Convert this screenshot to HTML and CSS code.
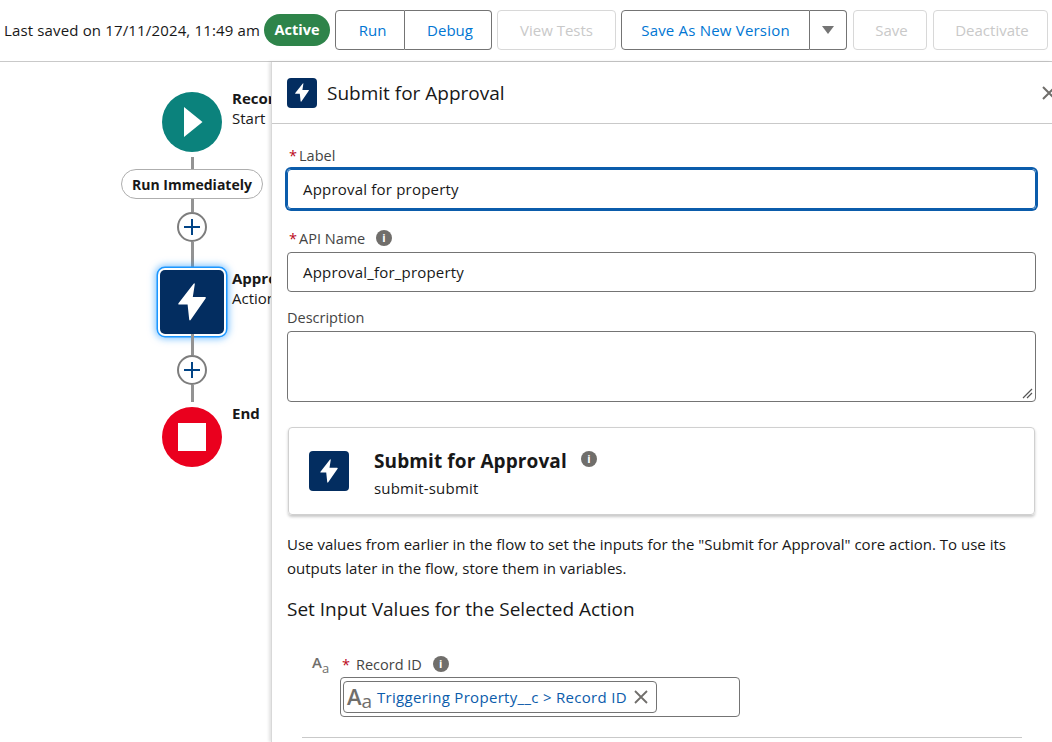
FILE: index.html
```html
<!DOCTYPE html>
<html lang="en">
<head>
  <meta charset="UTF-8">
  <title>Submit for Approval</title>
  <link rel="stylesheet" href="styles.css">
</head>
<body>
  <svg class="defs" width="0" height="0">
    <symbol id="bolt" viewBox="0 0 28 38">
      <path d="M15.6 0.8 L0.5 20.2 Q-0.2 21.5 1.2 21.5 L9.6 21.5 L11.2 36.6 Q11.8 38.4 12.8 36.8 L27.6 15.4 Q28.4 14 27 14 L14.8 14 L16.8 1.2 Q16.8 -0.4 15.6 0.8 Z"/>
    </symbol>
  </svg>

  <header class="toolbar">
    <span class="saved">Last saved on 17/11/2024, 11:49 am</span>
    <span class="status">Active</span>
    <div class="btn-group run-group">
      <button class="btn run-btn">Run</button>
      <button class="btn debug-btn">Debug</button>
    </div>
    <button class="btn single tests-btn" disabled>View Tests</button>
    <div class="btn-group save-group">
      <button class="btn save-new-btn">Save As New Version</button>
      <button class="btn caret-btn"><span class="caret"></span></button>
    </div>
    <button class="btn single save-btn" disabled>Save</button>
    <button class="btn single deactivate-btn" disabled>Deactivate</button>
  </header>

  <main class="workspace">
    <section class="canvas">
      <div class="flow">
        <div class="node-row">
          <div class="node round start">
            <svg width="20" height="30" viewBox="0 0 20 30"><path d="M1 0 L19.5 15 L1 30 Z" fill="#fff"/></svg>
          </div>
          <div class="node-text"><b>Record-Triggered</b><span>Start</span></div>
        </div>
        <div class="line line-a"></div>
        <div class="pill-label">Run Immediately</div>
        <div class="line line-b"></div>
        <div class="add"><svg width="18" height="18" viewBox="0 0 18 18"><path d="M9 1 V17 M1 9 H17" stroke="#014486" stroke-width="2"/></svg></div>
        <div class="line line-c"></div>
        <div class="node-row action-row">
          <div class="node action">
            <svg class="bolt" width="28" height="38"><use href="#bolt"/></svg>
          </div>
          <div class="node-text"><b>Approval for property</b><span>Action</span></div>
        </div>
        <div class="line line-d"></div>
        <div class="add"><svg width="18" height="18" viewBox="0 0 18 18"><path d="M9 1 V17 M1 9 H17" stroke="#014486" stroke-width="2"/></svg></div>
        <div class="line line-e"></div>
        <div class="node-row end-row">
          <div class="node round end"><span class="stop"></span></div>
          <div class="node-text"><b>End</b></div>
        </div>
      </div>
    </section>

    <section class="panel">
      <div class="panel-head">
        <span class="icon-box small"><svg class="bolt" width="14" height="19"><use href="#bolt"/></svg></span>
        <h1>Submit for Approval</h1>
        <svg class="close" width="14" height="14" viewBox="0 0 14 14"><path d="M1 1 L13 13 M13 1 L1 13" stroke="#706e6b" stroke-width="2"/></svg>
      </div>

      <div class="panel-body">
        <label class="field-label"><i>*</i>Label</label>
        <div class="text-input focused">Approval for property</div>

        <label class="field-label api-label"><i>*</i>API Name <span class="info"></span></label>
        <div class="text-input">Approval_for_property</div>

        <label class="field-label desc-label">Description</label>
        <div class="text-area">
          <svg class="grip" width="11" height="11" viewBox="0 0 11 11"><path d="M1 10 L10 1 M5 10 L10 5" stroke="#555" stroke-width="1.2"/></svg>
        </div>

        <div class="action-card">
          <span class="icon-box large"><svg class="bolt" width="18" height="24"><use href="#bolt"/></svg></span>
          <div class="card-text">
            <div class="card-title">Submit for Approval <span class="info"></span></div>
            <div class="card-sub">submit-submit</div>
          </div>
        </div>

        <p class="help">Use values from earlier in the flow to set the inputs for the "Submit for Approval" core action. To use its outputs later in the flow, store them in variables.</p>

        <h2>Set Input Values for the Selected Action</h2>

        <div class="input-row">
          <span class="type-glyph">A<small>a</small></span>
          <div class="input-col">
            <label class="field-label record-label"><i>*</i>Record ID <span class="info"></span></label>
            <div class="combo">
              <span class="chip">
                <span class="type-glyph big">A<small>a</small></span>
                <span class="chip-text">Triggering Property__c &gt; Record ID</span>
                <svg width="14" height="14" viewBox="0 0 14 14"><path d="M1 1 L13 13 M13 1 L1 13" stroke="#706e6b" stroke-width="1.8"/></svg>
              </span>
            </div>
          </div>
        </div>
        <div class="rule"></div>
      </div>
    </section>
  </main>
</body>
</html>
```

FILE: styles.css
```css
* {
  box-sizing: border-box;
}
html, body {
  margin: 0;
  height: 742px;
  overflow: hidden;
}
body {
  font-family: "Open Sans", "Noto Sans", Arial, sans-serif;
  font-size: 15px;
  color: #181818;
  background: #fff;
}
.defs {
  position: absolute;
}
.bolt {
  fill: #fff;
}

/* top bar */
.toolbar {
  height: 62px;
  border-bottom: 1px solid #c9c9c9;
  display: flex;
  align-items: center;
  padding: 0 0 2px 4px;
}
.saved {
  width: 260px;
  white-space: nowrap;
  letter-spacing: 0.15px;
}
.status {
  width: 66px;
  height: 32px;
  border-radius: 16px;
  background: #2e844a;
  color: #fff;
  font-weight: 700;
  font-size: 14.5px;
  display: flex;
  align-items: center;
  justify-content: center;
  margin-right: 5px;
}
.btn {
  height: 40px;
  font: inherit;
  background: #fff;
  color: #0176d3;
  border: 1px solid #747474;
  padding: 0;
  white-space: nowrap;
}
.btn-group {
  display: flex;
}
.btn-group .btn:first-child {
  border-radius: 4px 0 0 4px;
}
.btn-group .btn:last-child {
  border-radius: 0 4px 4px 0;
  border-left: 0;
}
.single {
  border-radius: 4px;
}
.btn:disabled {
  color: #c9c9c9;
  border-color: #d8d8d8;
}
.run-group {
  width: 157px;
  margin-right: 5px;
}
.run-btn {
  width: 70px;
  padding-left: 5px;
}
.debug-btn {
  flex: 1;
  padding-left: 4px;
}
.tests-btn {
  width: 119px;
  margin-right: 5px;
}
.save-group {
  width: 226px;
  margin-right: 6px;
}
.save-new-btn {
  width: 189px;
  letter-spacing: 0.2px;
}
.caret-btn {
  flex: 1;
  display: flex;
  align-items: center;
  justify-content: center;
}
.caret {
  border: 6.5px solid transparent;
  border-top: 8px solid #747474;
  border-bottom: 0;
}
.save-btn {
  width: 74px;
  margin-right: 6px;
  padding-left: 3px;
}
.deactivate-btn {
  width: 115px;
  padding-left: 3px;
}

.workspace {
  display: flex;
  height: 680px;
}

/* flow diagram */
.canvas {
  width: 271px;
  flex: none;
  overflow: hidden;
  background: #fff;
}
.flow {
  width: 300px;
  padding: 30px 0 0 120px;
  display: flex;
  flex-direction: column;
  align-items: flex-start;
}
.node-row {
  display: flex;
  align-items: flex-start;
  height: 60px;
  margin-left: 42px;
}
.node {
  flex: none;
  width: 60px;
  height: 60px;
  display: flex;
  align-items: center;
  justify-content: center;
}
.round {
  border-radius: 50%;
}
.start {
  background: #0b827c;
  padding-left: 2px;
}
.end {
  background: #ea001e;
}
.stop {
  width: 28px;
  height: 28px;
  background: #fff;
}
.action {
  background: #032d60;
  border-radius: 5px;
  box-shadow: 0 0 0 2px #fff, 0 0 0 3.5px #1b96ff, 0 0 7px 5px rgba(27, 150, 255, 0.55);
}
.node-text {
  margin: -4px 0 0 10px;
  white-space: nowrap;
  line-height: 20px;
  display: flex;
  flex-direction: column;
}
.line {
  width: 3px;
  background: #939393;
  margin-left: 71px;
}
.line-a { height: 12px; margin-top: 5px; }
.line-b { height: 13px; }
.line-c { height: 28px; }
.line-d { height: 21px; }
.line-e { height: 17px; margin-bottom: 5px; }
.action-row {
  height: 64px;
  margin-left: 40px;
}
.action-row .node {
  width: 64px;
  height: 64px;
}
.action-row .node-text {
  margin: -2px 0 0 8px;
}
.pill-label {
  width: 142px;
  height: 30px;
  margin-left: 1px;
  border: 1px solid #aeaeae;
  border-radius: 15px;
  font-size: 14px;
  font-weight: 700;
  display: flex;
  align-items: center;
  justify-content: center;
  white-space: nowrap;
  background: #fff;
}
.add {
  width: 30px;
  height: 30px;
  margin-left: 57px;
  border: 2px solid #7d7d7d;
  border-radius: 50%;
  background: #fff;
  display: flex;
  align-items: center;
  justify-content: center;
}

/* side panel */
.panel {
  flex: 1;
  min-width: 0;
  background: #fff;
  border-left: 1px solid #d8d8d8;
  box-shadow: -2px 0 3px rgba(0, 0, 0, 0.12);
}
.panel-head {
  height: 62px;
  border-bottom: 1px solid #c9c9c9;
  padding: 0 0 0 15px;
  display: flex;
  align-items: center;
}
.panel-head h1 {
  margin: 1px 0 0 10px;
  font-size: 19px;
  font-weight: 400;
  flex: 1;
}
.close {
  margin-right: -4px;
  flex: none;
}
.icon-box {
  background: #032d60;
  border-radius: 4px;
  display: flex;
  align-items: center;
  justify-content: center;
  flex: none;
}
.icon-box.small {
  width: 30px;
  height: 30px;
}
.icon-box.large {
  width: 40px;
  height: 40px;
}
.panel-body {
  padding: 21px 16px 0 15px;
}
.field-label {
  display: block;
  line-height: 22px;
  margin-bottom: -2px;
  font-size: 14.5px;
  color: #444;
}
.field-label i {
  color: #ba0517;
  font-style: normal;
  margin: 0 2px 0 2px;
}
.info {
  display: inline-block;
  width: 16px;
  height: 16px;
  border-radius: 50%;
  background: #706e6b;
  vertical-align: -2px;
  margin-left: 7px;
  position: relative;
}
.info::before {
  content: "i";
  position: absolute;
  inset: 0;
  color: #fff;
  font-size: 11px;
  font-weight: 700;
  line-height: 16px;
  text-align: center;
}
.text-input {
  height: 40px;
  margin-top: 4px;
  border: 1px solid #747474;
  border-radius: 4px;
  padding-left: 15px;
  display: flex;
  align-items: center;
  letter-spacing: 0.2px;
}
.text-input.focused {
  border-color: #0b5cab;
  box-shadow: 0 0 0 2px #0b5cab;
  outline: none;
}
.api-label {
  margin-top: 19px;
}
.desc-label {
  margin-top: 15px;
}
.text-area {
  height: 71px;
  margin-top: 4px;
  border: 1px solid #747474;
  border-radius: 4px;
  display: flex;
  align-items: flex-end;
  justify-content: flex-end;
  padding: 0 2px 2px 0;
}
.action-card {
  height: 88px;
  margin: 25px 0 0 1px;
  width: 747px;
  border: 1px solid #d0d0d0;
  border-radius: 4px;
  box-shadow: 0 2px 3px rgba(0, 0, 0, 0.22);
  padding: 0 20px;
  display: flex;
  align-items: center;
  gap: 25px;
}
.card-text {
  margin-top: 3px;
}
.card-title {
  font-size: 19px;
  font-weight: 700;
  line-height: 26px;
  letter-spacing: 0.1px;
}
.card-sub {
  margin-top: 4px;
  line-height: 20px;
  letter-spacing: 0.2px;
}
.card-title .info {
  margin-left: 9px;
  vertical-align: 1px;
}
.help {
  margin: 17px 0 0;
  line-height: 24px;
  width: 745px;
}
h2 {
  margin: 16px 0 0;
  font-size: 19px;
  font-weight: 400;
  line-height: 26px;
}
.input-row {
  display: flex;
  margin: 32px 0 0 25px;
}
.type-glyph {
  font-size: 15px;
  font-weight: 600;
  line-height: 20px;
  color: #706e6b;
  width: 28px;
  margin-top: -2px;
  white-space: nowrap;
  flex: none;
}
.type-glyph small {
  font-size: 13px;
  font-weight: 400;
  position: relative;
  top: 5px;
}
.input-col {
  flex: none;
  width: 400px;
}
.record-label i {
  margin-right: 6px;
}
.combo {
  margin-top: 3px;
  height: 40px;
  border: 1px solid #747474;
  border-radius: 4px;
  padding: 3px 2px;
  display: flex;
}
.chip {
  height: 32px;
  width: 314px;
  border: 1px solid #747474;
  border-radius: 4px;
  display: flex;
  align-items: center;
  padding: 0 8px 0 3px;
}
.type-glyph.big {
  font-size: 22px;
  width: 30px;
  margin-top: 0;
  line-height: 30px;
}
.type-glyph.big small {
  font-size: 19px;
  top: 3px;
}
.chip-text {
  color: #0b5cab;
  flex: 1;
  white-space: nowrap;
  letter-spacing: 0.3px;
}
.rule {
  margin: 20px 0 0 15px;
  width: 720px;
  border-top: 1px solid #c9c9c9;
}
```
